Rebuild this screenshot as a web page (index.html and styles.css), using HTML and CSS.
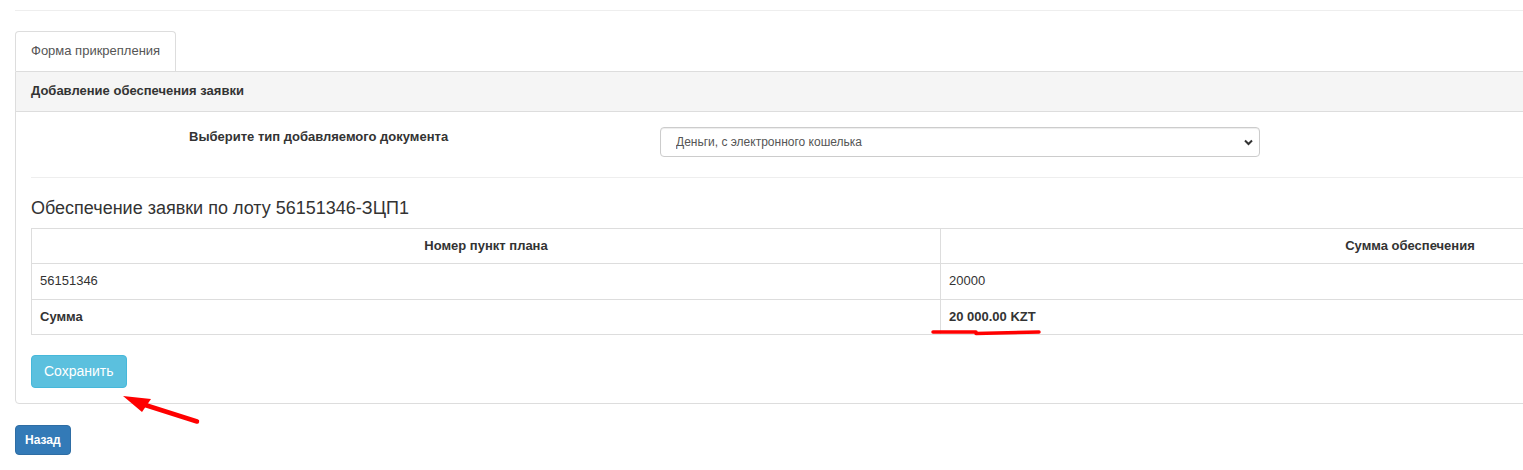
FILE: index.html
```html
<!DOCTYPE html>
<html lang="ru">
<head>
<meta charset="utf-8">
<title>Форма прикрепления</title>
<link rel="stylesheet" href="styles.css">
</head>
<body>
<div class="page">
  <div class="topline"></div>
  <ul class="tabs">
    <li class="tab active">Форма прикрепления</li>
  </ul>
  <div class="panel">
    <div class="panel-heading">Добавление обеспечения заявки</div>
    <div class="panel-body">
      <div class="form-row">
        <label class="control-label" for="doctype">Выберите тип добавляемого документа</label>
        <div class="select-wrap">
          <select id="doctype" class="form-control">
            <option>Деньги, с электронного кошелька</option>
          </select>
          <svg class="chevron" width="9" height="7" viewBox="0 0 9 7"><path d="M1 1.5 L4.5 5 L8 1.5" fill="none" stroke="#333" stroke-width="2"/></svg>
        </div>
      </div>
      <hr class="sep">
      <h4 class="title">Обеспечение заявки по лоту 56151346-ЗЦП1</h4>
      <table class="table">
        <thead>
          <tr><th class="c1">Номер пункт плана</th><th class="c2">Сумма обеспечения</th></tr>
        </thead>
        <tbody>
          <tr><td class="tall">56151346</td><td class="tall">20000</td></tr>
          <tr><td><b>Сумма</b></td><td><b>20 000.00 KZT</b></td></tr>
        </tbody>
      </table>
      <button class="btn btn-info">Сохранить</button>
    </div>
  </div>
  <button class="btn btn-primary btn-sm">Назад</button>
</div>
<svg class="annot" width="1523" height="470" viewBox="0 0 1523 470">
  <path d="M933 332 L976 332 M976 333.5 L1039 332" fill="none" stroke="#f00" stroke-width="3.5" stroke-linecap="round"/>
  <path d="M197 421.5 L142 404" fill="none" stroke="#f00" stroke-width="4.5" stroke-linecap="round"/>
  <polygon points="123,396 151,399 142,412" fill="#f00"/>
</svg>
</body>
</html>
```
FILE: styles.css
```css
html, body {
  margin: 0;
  padding: 0;
  overflow: hidden;
  background: #fff;
}
body {
  font-family: "Liberation Sans", Arial, sans-serif;
  font-size: 13px;
  line-height: 1.42857;
  color: #333;
  position: relative;
  width: 1523px;
  height: 470px;
}
.page {
  width: 1881px;
  padding-left: 15px;
}
.topline {
  margin-top: 10px;
  border-top: 1px solid #eee;
}
.tabs {
  list-style: none;
  margin: 20px 0 0;
  padding: 0;
  display: flex;
}
.tab {
  padding: 10px 15px 10px;
  height: 19px;
  border: 1px solid #ddd;
  border-bottom: none;
  border-radius: 4px 4px 0 0;
  color: #555;
  background: #fff;
}
.panel {
  border: 1px solid #ddd;
  border-radius: 0 0 4px 4px;
  background: #fff;
}
.panel-heading {
  background: #f5f5f5;
  border-bottom: 1px solid #ddd;
  padding: 10px 15px;
  font-weight: bold;
  height: 19px;
}
.panel-body {
  padding: 15px;
}
.form-row {
  display: flex;
  align-items: flex-start;
}
.control-label {
  width: 471px;
  padding-left: 158px;
  font-weight: bold;
  line-height: 19px;
  padding-top: 0;
}
.select-wrap {
  position: relative;
  width: 600px;
}
.form-control {
  display: block;
  width: 600px;
  height: 30px;
  box-sizing: border-box;
  border: 1px solid #ccc;
  border-radius: 4px;
  box-shadow: inset 0 1px 1px rgba(0,0,0,.075);
  padding: 4px 12px 4px 15px;
  font-family: "Liberation Sans", Arial, sans-serif;
  font-size: 12px;
  color: #555;
  background: #fff;
  appearance: none;
  -webkit-appearance: none;
}
.chevron {
  position: absolute;
  right: 7px;
  top: 12px;
  pointer-events: none;
}
.sep {
  margin: 20px 0;
  border: 0;
  border-top: 1px solid #eee;
  height: 0;
}
.title {
  margin: 0 0 10px;
  font-size: 18px;
  font-weight: normal;
  line-height: 20px;
  color: #333;
}
.table {
  width: 100%;
  border-collapse: collapse;
  margin-bottom: 20px;
}
.table th, .table td {
  border: 1px solid #ddd;
  padding: 8px;
  line-height: 18px;
  text-align: left;
}
.table td.tall {
  padding-bottom: 9px;
}
.table th {
  text-align: center;
  font-weight: bold;
}
.table .c1 {
  width: 892px;
}
.btn {
  display: block;
  font-family: "Liberation Sans", Arial, sans-serif;
  border-radius: 4px;
  color: #fff;
  cursor: pointer;
}
.btn-info {
  background: #5bc0de;
  border: 1px solid #46b8da;
  font-size: 14px;
  line-height: 19px;
  padding: 6px 12px;
  height: 33px;
}
.btn-primary {
  background: #337ab7;
  border: 1px solid #2e6da4;
}
.btn-sm {
  margin-top: 21px;
  font-size: 12px;
  font-weight: bold;
  line-height: 18px;
  padding: 5px 9px;
  height: 30px;
}
.annot {
  position: absolute;
  left: 0;
  top: 0;
  pointer-events: none;
}
```
